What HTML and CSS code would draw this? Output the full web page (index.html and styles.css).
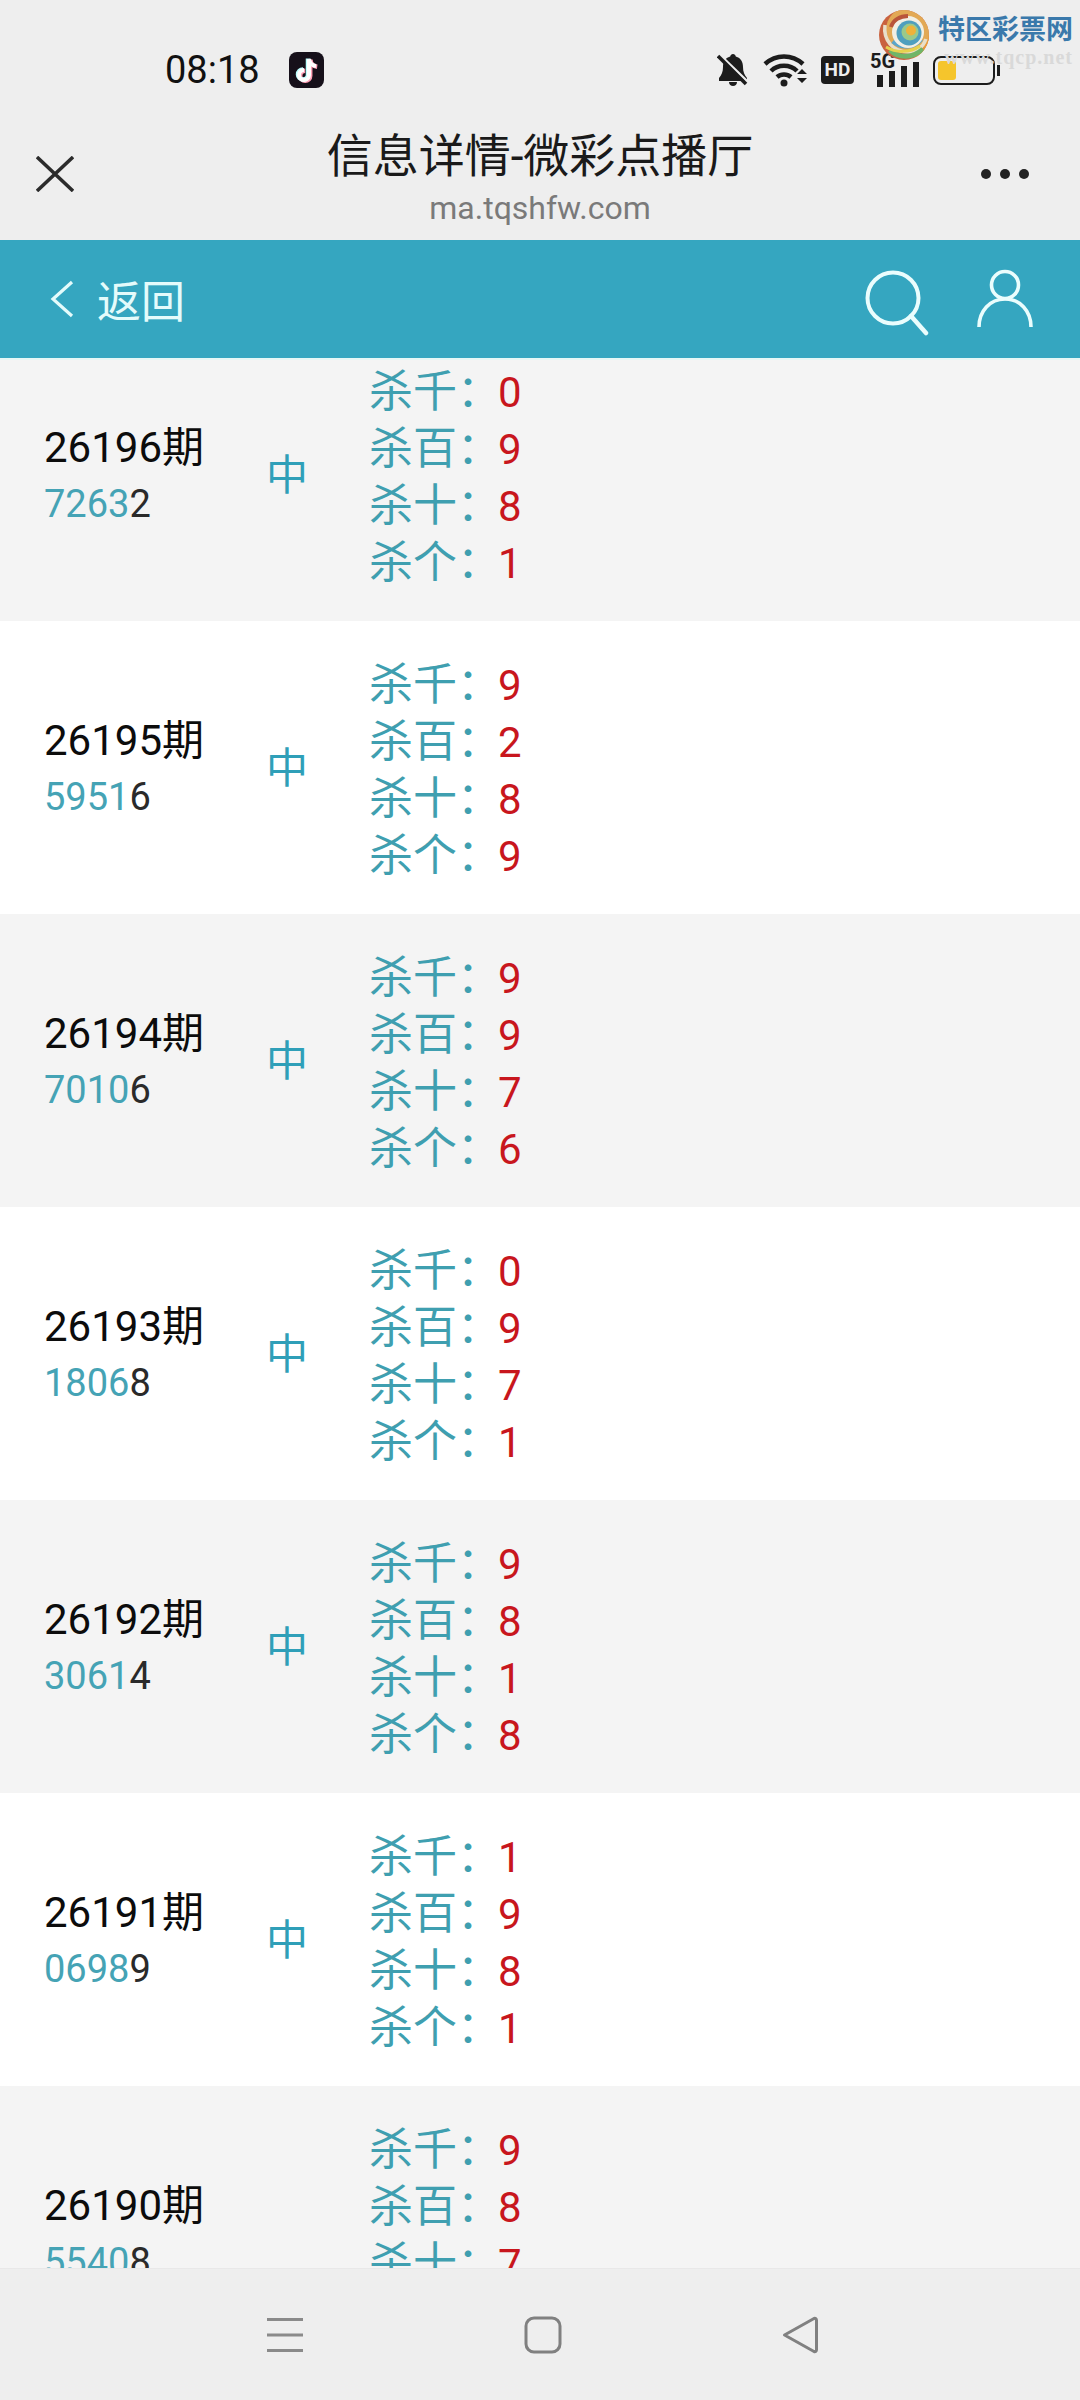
FILE: index.html
```html
<!DOCTYPE html>
<html lang="zh-CN">
  <head>
    <meta charset="UTF-8" />
    <meta name="viewport" content="width=device-width, initial-scale=1.0" />
    <title>信息详情-微彩点播厅</title>
    <link rel="stylesheet" href="styles.css">
  </head>
  <body>
    <div class="phone">
      <!-- 状态栏 + 标题栏 -->
      <div class="topNode">
        <div class="statusBar">
          <span class="time">08:18</span>
          <svg class="tiktok" width="35" height="36" viewBox="0 0 35 36">
            <rect width="35" height="36" rx="8" fill="#16101a"/>
            <path d="M20 7v16a5 5 0 1 1-5-5" fill="none" stroke="#ff9fb5" stroke-width="4.5" transform="translate(1.2 .8)"/>
            <path d="M20 7c.5 4 3 6.500 7 7" fill="none" stroke="#ff9fb5" stroke-width="4.5" transform="translate(1.2 .8)"/>
            <path d="M20 7v16a5 5 0 1 1-5-5" fill="none" stroke="#bff" stroke-width="4.500" transform="translate(-1 -.6)"/>
            <path d="M20 7v16a5 5 0 1 1-5-5" fill="none" stroke="#fff" stroke-width="4"/>
            <path d="M20 7c.5 4 3 6.500 7 7" fill="none" stroke="#fff" stroke-width="4"/>
          </svg>
          <div class="statusIcons">
            <svg width="32" height="34" viewBox="0 0 32 34">
              <path d="M16 1c1.500 0 2.500 1 2.800 2.500C24 5 26 9 26 14c0 5 1.500 8 4 11v3H2v-3c2.500-3 4-6 4-11 0-5 2-9 7.200-10.500C13.500 2 14.500 1 16 1z" fill="#1c1c1c"/>
              <path d="M12 29h8c0 2.500-1.800 4-4 4s-4-1.500-4-4z" fill="#1c1c1c"/>
              <path d="M3 2l29 28" stroke="#eee" stroke-width="2.500"/>
              <path d="M1 3l28 28" stroke="#1c1c1c" stroke-width="3.500"/>
            </svg>
            <svg class="wifi" width="46" height="34" viewBox="0 0 46 34">
              <path d="M2 11c11-10 27-10 38 0M8 18c7-7 19-7 26 0M14 24c4-3.500 10-3.500 14 0" fill="none" stroke="#1c1c1c" stroke-width="4.500"/>
              <circle cx="21" cy="30" r="3.500" fill="#1c1c1c"/>
              <path d="M34 21l5-5 5 5zM34 25l5 5 5-5z" fill="#1c1c1c"/>
            </svg>
            <span class="hd">HD</span>
            <div class="signal">
              <span class="fiveG">5G</span>
              <svg width="44" height="25" viewBox="0 0 44 25">
                <path d="M1 13h6v12H1zM13 9h6v16h-6zM25 4h6v21h-6zM37 0h6v25h-6z" fill="#1c1c1c"/>
              </svg>
            </div>
            <div class="battery">
              <div class="batteryFill"></div>
            </div>
            <div class="batteryNub"></div>
          </div>
        </div>
        <div class="navBar">
          <svg class="closeIcon" width="38" height="36" viewBox="0 0 38 36">
            <path d="M1 1l36 34M37 1L1 35" stroke="#2b2b2b" stroke-width="3.500" fill="none"/>
          </svg>
          <div class="navTitle">
            <div class="pageName">信息详情-微彩点播厅</div>
            <div class="pageHost">ma.tqshfw.com</div>
          </div>
          <div class="moreNode"><i></i><i></i><i></i></div>
        </div>
      </div>

      <!-- 蓝色头部 -->
      <div class="headNode">
        <div class="backNode">
          <svg width="24" height="38" viewBox="0 0 24 38">
            <path d="M22 2L3 19l19 17" fill="none" stroke="#e4fbfb" stroke-width="3.200"/>
          </svg>
          <span>返回</span>
        </div>
        <div class="headIcons">
          <svg class="searchIcon" width="64" height="66" viewBox="0 0 64 66">
            <circle cx="28" cy="28" r="25.500" fill="none" stroke="#eafdfd" stroke-width="4"/>
            <path d="M46 46l15 17" stroke="#eafdfd" stroke-width="4.500" stroke-linecap="round" fill="none"/>
          </svg>
          <svg width="58" height="60" viewBox="0 0 58 60">
            <circle cx="29" cy="16" r="13.500" fill="none" stroke="#eafdfd" stroke-width="3.600"/>
            <path d="M3 58c0-16 11-28 26-28s26 12 26 28" fill="none" stroke="#eafdfd" stroke-width="3.600"/>
          </svg>
        </div>
      </div>

      <!-- 列表 -->
      <div class="listNode">
        <div class="listInner">
          <div class="rowNode">
            <div class="issueNode"><div class="issueNo">26196期</div><div class="openNo"><em>7263</em>2</div></div>
            <div class="resultNode">中</div>
            <ul class="killList">
              <li>杀千：<b>0</b></li><li>杀百：<b>9</b></li><li>杀十：<b>8</b></li><li>杀个：<b>1</b></li>
            </ul>
          </div>
          <div class="rowNode">
            <div class="issueNode"><div class="issueNo">26195期</div><div class="openNo"><em>5951</em>6</div></div>
            <div class="resultNode">中</div>
            <ul class="killList">
              <li>杀千：<b>9</b></li><li>杀百：<b>2</b></li><li>杀十：<b>8</b></li><li>杀个：<b>9</b></li>
            </ul>
          </div>
          <div class="rowNode">
            <div class="issueNode"><div class="issueNo">26194期</div><div class="openNo"><em>7010</em>6</div></div>
            <div class="resultNode">中</div>
            <ul class="killList">
              <li>杀千：<b>9</b></li><li>杀百：<b>9</b></li><li>杀十：<b>7</b></li><li>杀个：<b>6</b></li>
            </ul>
          </div>
          <div class="rowNode">
            <div class="issueNode"><div class="issueNo">26193期</div><div class="openNo"><em>1806</em>8</div></div>
            <div class="resultNode">中</div>
            <ul class="killList">
              <li>杀千：<b>0</b></li><li>杀百：<b>9</b></li><li>杀十：<b>7</b></li><li>杀个：<b>1</b></li>
            </ul>
          </div>
          <div class="rowNode">
            <div class="issueNode"><div class="issueNo">26192期</div><div class="openNo"><em>3061</em>4</div></div>
            <div class="resultNode">中</div>
            <ul class="killList">
              <li>杀千：<b>9</b></li><li>杀百：<b>8</b></li><li>杀十：<b>1</b></li><li>杀个：<b>8</b></li>
            </ul>
          </div>
          <div class="rowNode">
            <div class="issueNode"><div class="issueNo">26191期</div><div class="openNo"><em>0698</em>9</div></div>
            <div class="resultNode">中</div>
            <ul class="killList">
              <li>杀千：<b>1</b></li><li>杀百：<b>9</b></li><li>杀十：<b>8</b></li><li>杀个：<b>1</b></li>
            </ul>
          </div>
          <div class="rowNode">
            <div class="issueNode"><div class="issueNo">26190期</div><div class="openNo"><em>5540</em>8</div></div>
            <div class="resultNode"></div>
            <ul class="killList">
              <li>杀千：<b>9</b></li><li>杀百：<b>8</b></li><li>杀十：<b>7</b></li>
            </ul>
          </div>
        </div>
      </div>

      <!-- 系统导航 -->
      <div class="bottomNode">
        <svg width="38" height="36" viewBox="0 0 38 36">
          <path d="M1 2.500h36M1 18h36M1 33.500h36" stroke="#8a8a8a" stroke-width="3" fill="none"/>
        </svg>
        <svg width="38" height="38" viewBox="0 0 38 38">
          <rect x="2" y="2" width="34" height="34" rx="8" fill="none" stroke="#808080" stroke-width="3"/>
        </svg>
        <svg width="38" height="38" viewBox="0 0 38 38">
          <path d="M3.500 19L33 2.500c1.500-.5 2.500.5 2.500 2v29c0 1.500-1 2.500-2.500 2L3.500 19z" fill="none" stroke="#808080" stroke-width="3" stroke-linejoin="round"/>
        </svg>
      </div>

      <!-- 水印 -->
      <div class="waterMark">
        <svg class="lolli" width="52" height="54" viewBox="0 0 52 54">
          <defs>
            <clipPath id="lolliClip"><circle cx="26" cy="27" r="25"/></clipPath>
          </defs>
          <g clip-path="url(#lolliClip)">
            <rect width="52" height="54" fill="#c9623f"/>
            <circle cx="31" cy="22" r="23" fill="#e2a955"/>
            <path d="M52 16c0 20-12 38-30 38l30 0z" fill="#e99a3a"/>
            <path d="M7 17C5 32 15 44 30 44c9 0 15-5 18-13" fill="none" stroke="#e8dfca" stroke-width="3.500"/>
            <path d="M12 42c8 8 22 9 33-1" fill="none" stroke="#6fb568" stroke-width="5"/>
            <path d="M8 39c10 6 24 6 34-1" fill="none" stroke="#e6d24e" stroke-width="3"/>
            <path d="M15 33c8 7 20 7 28-2" fill="none" stroke="#5aa5cc" stroke-width="5"/>
            <circle cx="30" cy="24" r="16" fill="#f2efe4"/>
            <circle cx="31" cy="25" r="12.500" fill="#4f9fbe"/>
            <circle cx="32" cy="24" r="8.500" fill="#9ac98a"/>
            <circle cx="33" cy="22.500" r="5" fill="#eeb23a"/>
            <path d="M13 19c2-7 9-11 17-11" fill="none" stroke="#b9553a" stroke-width="4"/>
          </g>
        </svg>
        <div class="markText">
          <div class="markName">特区彩票网</div>
          <div class="markUrl">www.tqcp.net</div>
        </div>
      </div>
    </div>
  </body>
</html>
```

FILE: styles.css
```css
* {
  margin: 0;
  padding: 0;
  list-style: none;
  box-sizing: border-box;
}
body {
  background: #fff;
  font-family: Roboto, "Noto Sans CJK SC", sans-serif;
}
.phone {
  position: relative;
  display: flex;
  flex-direction: column;
  width: 1080px;
  height: 2400px;
  overflow: hidden;
}

/* top */
.topNode {
  height: 240px;
  background: #eeeeee;
  flex-shrink: 0;
}
.statusBar {
  display: flex;
  align-items: center;
  height: 70px;
  margin-top: 35px;
  padding: 0 80px 0 165px;
}
.time {
  font-size: 38px;
  color: #111;
}
.tiktok {
  margin-left: 29px;
}
.statusIcons {
  display: flex;
  align-items: center;
  margin-left: auto;
}
.wifi {
  margin-left: 14px;
}
.hd {
  width: 33px;
  height: 28px;
  margin-left: 12px;
  border-radius: 4px;
  background: #1c1c1c;
  color: #eee;
  font-size: 19px;
  font-weight: 700;
  line-height: 28px;
  text-align: center;
}
.signal {
  position: relative;
  width: 44px;
  height: 34px;
  margin-left: 19px;
}
.signal svg {
  position: absolute;
  left: 3px;
  bottom: 0;
}
.fiveG {
  position: absolute;
  left: -3px;
  top: -2px;
  font-size: 20px;
  font-weight: 700;
  line-height: 20px;
  color: #1c1c1c;
}
.battery {
  width: 62px;
  height: 29px;
  margin-left: 16px;
  padding: 3px;
  border: 2px solid #1c1c1c;
  border-radius: 8px;
}
.batteryFill {
  width: 18px;
  height: 100%;
  border-radius: 3px;
  background: #f5c52c;
}
.batteryNub {
  width: 3px;
  height: 11px;
  margin-left: 2px;
  background: #1c1c1c;
}
.navBar {
  display: grid;
  grid-template-columns: 1fr auto 1fr;
  align-items: center;
  margin-top: 17px;
  padding: 0 36px;
}
.navTitle {
  text-align: center;
}
.pageName {
  font-size: 46px;
  line-height: 68px;
  color: #1a1a1a;
}
.pageHost {
  font-size: 32px;
  line-height: 36px;
  color: #7a7a7a;
}
.moreNode {
  display: flex;
  justify-content: flex-end;
  gap: 9px;
  margin-right: 15px;
}
.moreNode i {
  width: 10px;
  height: 10px;
  border-radius: 50%;
  background: #222;
}

/* teal head */
.headNode {
  display: flex;
  justify-content: space-between;
  align-items: center;
  flex-shrink: 0;
  height: 120px;
  padding: 0 46px 0 50px;
  background: #35a6c0;
  border-bottom: 2px solid #e6f7f6;
}
.backNode {
  display: flex;
  align-items: center;
  gap: 23px;
  font-size: 44px;
  color: #e4fbfb;
}
.headIcons {
  display: flex;
  align-items: center;
  gap: 47px;
}
.searchIcon {
  margin-top: 8px;
}

/* list */
.listNode {
  flex: 1;
  overflow: hidden;
}
.listInner {
  margin-top: -32px;
}
.rowNode {
  display: flex;
  align-items: center;
  height: 293px;
  padding-left: 44px;
  background: #fff;
}
.rowNode:nth-child(odd) {
  background: #f4f4f4;
}
.issueNode {
  width: 222px;
  margin-top: 2px;
  line-height: 57px;
}
.issueNo {
  font-size: 42px;
  color: #0c0c0c;
}
.openNo {
  font-size: 38px;
  color: #2a2a2a;
}
.openNo em {
  font-style: normal;
  color: #45a3b5;
}
.resultNode {
  width: 103px;
  margin-bottom: 6px;
  font-size: 42px;
  color: #2f9fb8;
}
.killList {
  height: 228px;
  margin-top: 6px;
}
.killList li {
  height: 57px;
  font-size: 44px;
  line-height: 57px;
  color: #3f9fb0;
}
.killList b {
  margin-left: -3px;
  font-weight: 400;
  font-size: 42px;
  color: #c8161d;
}

/* nav */
.bottomNode {
  display: flex;
  justify-content: space-between;
  align-items: center;
  flex-shrink: 0;
  height: 132px;
  padding: 0 261px 0 266px;
  background: #eeeeee;
  border-top: 1px solid #e8e8e8;
}

/* watermark */
.waterMark {
  position: absolute;
  top: 8px;
  left: 878px;
  display: flex;
  gap: 8px;
}
.markName {
  font-size: 27px;
  font-weight: 700;
  line-height: 32px;
  margin-top: 6px;
  color: #3a79ab;
}
.markUrl {
  font-family: "Liberation Serif", serif;
  font-size: 20px;
  font-weight: 700;
  line-height: 22px;
  letter-spacing: 1px;
  text-align: right;
  color: #d9d9d9;
}
```
